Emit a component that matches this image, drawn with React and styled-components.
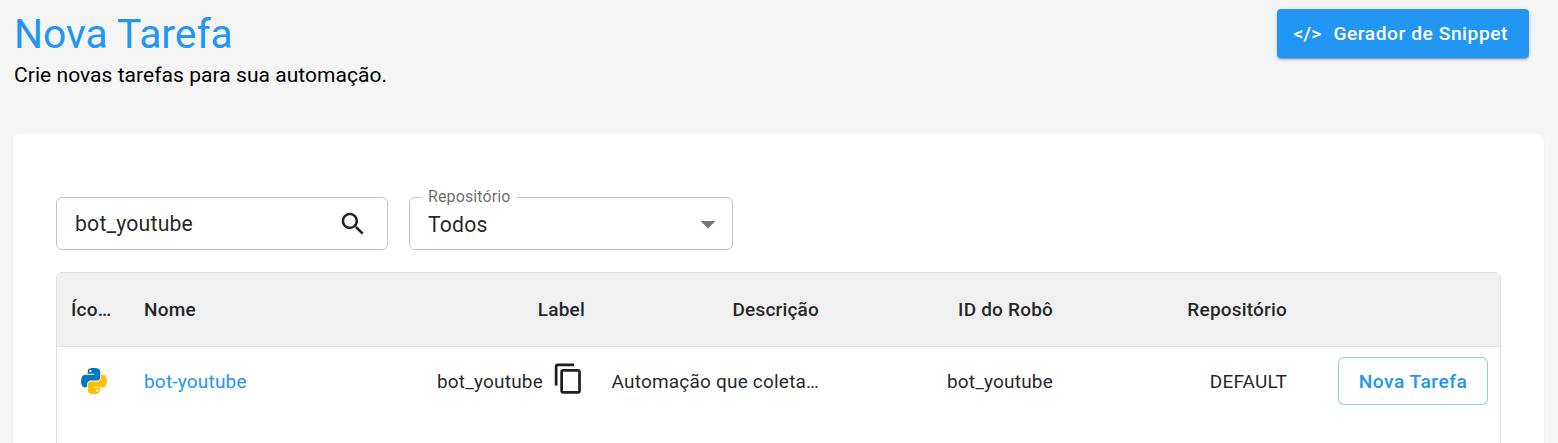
import styled, { createGlobalStyle } from "styled-components";

const GlobalStyle = createGlobalStyle`
  html, body {
    margin: 0;
    height: 100%;
    overflow: hidden;
    background: #f5f5f5;
    font-family: Roboto, "Liberation Sans", sans-serif;
  }
  * { box-sizing: border-box; }
`;

const columns = "73px 235px 234px 234px 234px 234px 1fr";

const PythonIcon = () => (
  <svg width="26" height="26" viewBox="13 2 102 103" aria-hidden="true">
    <path
      fill="#0277bd"
      d="M63.391 1.988c-4.222.02-8.252.379-11.8 1.007-10.45 1.846-12.346 5.71-12.346 12.837v9.411h24.693v3.137H29.977c-7.176 0-13.46 4.313-15.426 12.521-2.268 9.405-2.368 15.275 0 25.096 1.755 7.311 5.947 12.519 13.124 12.519h8.491V67.234c0-8.151 7.051-15.34 15.426-15.34h24.665c6.866 0 12.346-5.654 12.346-12.548V15.833c0-6.693-5.646-11.72-12.346-12.837-4.244-.706-8.645-1.027-12.866-1.008zM50.037 9.557c2.55 0 4.634 2.117 4.634 4.721 0 2.593-2.083 4.69-4.634 4.69-2.56 0-4.633-2.097-4.633-4.69-.001-2.604 2.073-4.721 4.633-4.721z"
    />
    <path
      fill="#ffc107"
      d="M91.682 28.38v10.966c0 8.5-7.208 15.655-15.426 15.655H51.591c-6.756 0-12.346 5.783-12.346 12.549v23.515c0 6.691 5.818 10.628 12.346 12.547 7.816 2.297 15.312 2.713 24.665 0 6.216-1.801 12.346-5.423 12.346-12.547v-9.412H63.938v-3.138h37.012c7.176 0 9.852-5.005 12.348-12.519 2.578-7.735 2.467-15.174 0-25.096-1.774-7.145-5.161-12.521-12.348-12.521h-9.268zM77.809 87.927c2.561 0 4.634 2.097 4.634 4.692 0 2.602-2.074 4.719-4.634 4.719-2.55 0-4.633-2.117-4.633-4.719 0-2.595 2.083-4.692 4.633-4.692z"
    />
  </svg>
);

const SearchIcon = () => (
  <svg width="30" height="30" viewBox="0 0 24 24" fill="rgba(0,0,0,0.87)" aria-hidden="true">
    <path d="M15.5 14h-.79l-.28-.27C15.41 12.59 16 11.11 16 9.5 16 5.91 13.09 3 9.5 3S3 5.91 3 9.5 5.91 16 9.5 16c1.61 0 3.09-.59 4.23-1.57l.27.28v.79l5 4.99L20.49 19l-4.99-5zm-6 0C7.01 14 5 11.99 5 9.5S7.01 5 9.5 5 14 7.01 14 9.5 11.99 14 9.5 14z" />
  </svg>
);

const CopyIcon = styled((props) => (
  <svg width="33" height="33" viewBox="0 0 24 24" fill="rgba(0,0,0,0.87)" aria-hidden="true" {...props}>
    <path d="M16 1H4c-1.1 0-2 .9-2 2v14h2V3h12V1zm3 4H8c-1.1 0-2 .9-2 2v14c0 1.1.9 2 2 2h11c1.1 0 2-.9 2-2V7c0-1.1-.9-2-2-2zm0 16H8V7h11v14z" />
  </svg>
))`
  margin-bottom: 6px;
`;

const ArrowIcon = () => (
  <svg width="36" height="36" viewBox="0 0 24 24" fill="rgba(0,0,0,0.54)" aria-hidden="true">
    <path d="M7 10l5 5 5-5z" />
  </svg>
);

export default function App() {
  return (
    <>
      <GlobalStyle />
      <Page>
        <Header>
          <div>
            <Title>Nova Tarefa</Title>
            <Subtitle>Crie novas tarefas para sua automação.</Subtitle>
          </div>
          <SnippetButton>
            <CodeMark>&lt;/&gt;</CodeMark>
            Gerador de Snippet
          </SnippetButton>
        </Header>
        <Card>
          <Filters>
            <SearchBox>
              <SearchInput defaultValue="bot_youtube" />
              <SearchIcon />
            </SearchBox>
            <SelectBox>
              <SelectLabel>Repositório</SelectLabel>
              Todos
              <ArrowIcon />
            </SelectBox>
          </Filters>
          <Table>
            <HeadRow>
              <IconHeadCell>
                <Truncated>Ícone</Truncated>
              </IconHeadCell>
              <HeadCell>Nome</HeadCell>
              <HeadCell $right>Label</HeadCell>
              <HeadCell $right>Descrição</HeadCell>
              <HeadCell $right>ID do Robô</HeadCell>
              <HeadCell $right>Repositório</HeadCell>
              <HeadCell />
            </HeadRow>
            <BodyRow>
              <IconCell>
                <PythonIcon />
              </IconCell>
              <BodyCell>
                <NameLink href="#">bot-youtube</NameLink>
              </BodyCell>
              <LabelCell>
                bot_youtube
                <CopyIcon />
              </LabelCell>
              <BodyCell $right>Automação que coleta…</BodyCell>
              <BodyCell $right>bot_youtube</BodyCell>
              <BodyCell $right>DEFAULT</BodyCell>
              <ActionCell>
                <OutlineButton>Nova Tarefa</OutlineButton>
              </ActionCell>
            </BodyRow>
          </Table>
        </Card>
      </Page>
    </>
  );
}

const Page = styled.div`
  height: 443px;
  overflow: hidden;
  padding: 9px 14px 0 13px;
`;

const Header = styled.header`
  display: flex;
  justify-content: space-between;
  align-items: flex-start;
  height: 125px;
  padding: 0 15px 0 1px;
`;

const Title = styled.h1`
  margin: 0;
  padding-top: 1px;
  font-size: 40.8px;
  line-height: 48px;
  font-weight: 400;
  color: #2196f3;
`;

const Subtitle = styled.p`
  margin: 3px 0 0;
  font-size: 21px;
  line-height: 28px;
  letter-spacing: 0.05px;
  color: #000;
`;

const SnippetButton = styled.button`
  display: flex;
  align-items: center;
  gap: 12px;
  height: 49px;
  padding: 0 21px 0 17px;
  border: 0;
  border-radius: 4px;
  background: #2196f3;
  color: #fff;
  font-family: inherit;
  font-size: 19.2px;
  font-weight: 500;
  letter-spacing: 0.55px;
  box-shadow: 0 3px 1px -2px rgba(0, 0, 0, 0.2), 0 2px 2px 0 rgba(0, 0, 0, 0.14),
    0 1px 5px 0 rgba(0, 0, 0, 0.12);
`;

const CodeMark = styled.span`
  letter-spacing: 0.2px;
`;

const Card = styled.main`
  height: 400px;
  padding: 63px 43px 0;
  border-radius: 6px;
  background: #fff;
  box-shadow: 0 1px 2px rgba(0, 0, 0, 0.08);
`;

const Filters = styled.div`
  display: flex;
  gap: 21px;
  margin-bottom: 22px;
`;

const SearchBox = styled.div`
  display: flex;
  align-items: center;
  justify-content: space-between;
  width: 332px;
  height: 53px;
  padding: 0 19px 0 18px;
  border: 1px solid #c4c4c4;
  border-radius: 6px;
`;

const SearchInput = styled.input`
  width: 240px;
  padding: 0;
  border: 0;
  outline: 0;
  font-family: inherit;
  font-size: 21.2px;
  letter-spacing: 0.2px;
  color: rgba(0, 0, 0, 0.87);
`;

const SelectBox = styled.div`
  position: relative;
  display: flex;
  align-items: center;
  justify-content: space-between;
  width: 324px;
  height: 53px;
  padding: 1px 6px 0 18px;
  border: 1px solid #c4c4c4;
  border-radius: 6px;
  font-size: 21.2px;
  letter-spacing: 0.2px;
  color: rgba(0, 0, 0, 0.87);
`;

const SelectLabel = styled.label`
  position: absolute;
  top: -11px;
  left: 12px;
  padding: 0 6px;
  background: #fff;
  font-size: 16px;
  line-height: 20px;
  letter-spacing: 0.12px;
  color: rgba(0, 0, 0, 0.6);
`;

const Table = styled.div`
  height: 200px;
  border: 1px solid #e0e0e0;
  border-radius: 6px;
  overflow: hidden;
`;

const HeadRow = styled.div`
  display: grid;
  grid-template-columns: ${columns};
  height: 74px;
  background: #f0f0f0;
  border-bottom: 1px solid #e0e0e0;
`;

const HeadCell = styled.div`
  display: flex;
  align-items: center;
  justify-content: ${(p) => (p.$right ? "flex-end" : "flex-start")};
  min-width: 0;
  padding: 0 14px;
  font-size: 19px;
  font-weight: 500;
  letter-spacing: 0.2px;
  color: rgba(0, 0, 0, 0.87);
  white-space: nowrap;
  overflow: hidden;
`;

const IconHeadCell = styled(HeadCell)`
  padding-right: 16px;
`;

const Truncated = styled.span`
  overflow: hidden;
  text-overflow: ellipsis;
`;

const BodyRow = styled.div`
  display: grid;
  grid-template-columns: ${columns};
  height: 68px;
`;

const BodyCell = styled.div`
  display: flex;
  align-items: center;
  justify-content: ${(p) => (p.$right ? "flex-end" : "flex-start")};
  min-width: 0;
  padding: 0 14px;
  font-size: 19px;
  letter-spacing: 0.2px;
  color: rgba(0, 0, 0, 0.87);
  white-space: nowrap;
`;

const IconCell = styled(BodyCell)`
  padding-left: 24px;
`;

const LabelCell = styled(BodyCell)`
  justify-content: flex-end;
  gap: 9px;
`;

const ActionCell = styled(BodyCell)`
  justify-content: flex-end;
  padding-right: 12px;
`;

const NameLink = styled.a`
  color: #2196f3;
  text-decoration: none;
`;

const OutlineButton = styled.button`
  width: 150px;
  height: 48px;
  border: 1px solid rgba(33, 150, 243, 0.5);
  border-radius: 6px;
  background: #fff;
  color: #2196f3;
  font-family: inherit;
  font-size: 19.2px;
  font-weight: 500;
  letter-spacing: 0.5px;
`;
